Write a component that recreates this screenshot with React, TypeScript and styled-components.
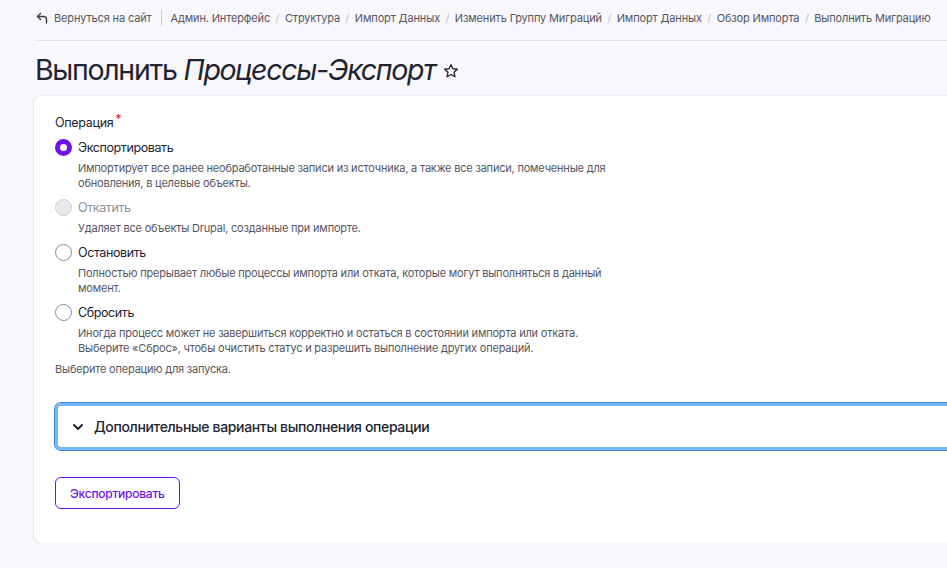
import React from "react";
import styled, { createGlobalStyle } from "styled-components";

const GlobalStyle = createGlobalStyle`
  html, body {
    margin: 0;
    padding: 0;
    background: #f8f7fc;
    overflow: hidden;
  }
  body {
    font-family: Inter, "Noto Sans", sans-serif;
    color: #222330;
  }
`;

const Page = styled.div`
  width: 1120px;
  padding: 0 0 0 34px;
  box-sizing: border-box;
`;

const Breadcrumbs = styled.nav`
  display: flex;
  align-items: center;
  padding: 8px 0 12px 2px;
  border-bottom: 1px solid #e4e2ec;
  font-size: 11px;
  letter-spacing: -0.15px;
  line-height: 20px;
  color: #55565f;
`;

const BackLink = styled.a`
  display: flex;
  align-items: center;
  gap: 6px;
  padding-right: 9px;
  margin-right: 9px;
  border-right: 1px solid #c9c8d2;
  color: #55565f;
  text-decoration: none;
  height: 16px;
`;

const Crumb = styled.a`
  color: #55565f;
  text-decoration: none;
`;

const Slash = styled.span`
  color: #c4c3cc;
  margin: 0 5.5px;
`;

const Title = styled.h1`
  display: flex;
  align-items: center;
  margin: 11px 0 8px 1px;
  font-size: 28.5px;
  line-height: 36px;
  font-weight: 400;
  letter-spacing: -1.3px;
  em {
    font-style: italic;
    margin-left: 7px;
  }
`;

const Star = styled.svg`
  margin-left: 8px;
  margin-top: 2px;
`;

const Card = styled.div`
  background: #fff;
  border-radius: 8px;
  box-shadow: 0 1px 3px rgba(40, 30, 80, 0.12), 0 0 0 1px rgba(40, 30, 80, 0.03);
  padding: 18px 21px 34px;
`;

const FieldLabel = styled.div`
  font-size: 12.5px;
  letter-spacing: -0.3px;
  line-height: 18px;
  margin-bottom: 5px;
  sup {
    color: #d72222;
    font-size: 12px;
    margin-left: 2px;
    vertical-align: 4px;
    line-height: 0;
  }
`;

const Option = styled.div`
  margin-bottom: 6px;
`;

const OptionRow = styled.label<{ $disabled?: boolean }>`
  display: flex;
  align-items: center;
  gap: 6px;
  height: 20px;
  font-size: 12.5px;
  letter-spacing: -0.4px;
  color: ${(p) => (p.$disabled ? "#8e8f96" : "#222330")};
`;

const Radio = styled.span<{ $checked?: boolean; $disabled?: boolean }>`
  width: 17px;
  height: 17px;
  box-sizing: border-box;
  border-radius: 50%;
  flex-shrink: 0;
  background: ${(p) => (p.$disabled ? "#e8e8ea" : "#fff")};
  border: ${(p) =>
    p.$checked ? "5px solid #6d11ec" : p.$disabled ? "1px solid #cfcfd4" : "1px solid #8a8d96"};
`;

const Description = styled.div`
  margin: 4px 0 0 23px;
  max-width: 530px;
  font-size: 11px;
  letter-spacing: -0.2px;
  line-height: 15px;
  color: #55565f;
`;

const Hint = styled.div`
  font-size: 11px;
  letter-spacing: -0.2px;
  line-height: 15px;
  color: #55565f;
  margin-top: 0;
`;

const Details = styled.div`
  margin-top: 26px;
  height: 47px;
  box-sizing: border-box;
  border: 3px solid #74b8f6;
  box-shadow: 0 0 0 1px #3a85d6;
  border-radius: 6px;
  display: flex;
  align-items: center;
  padding-left: 14px;
  gap: 10px;
  font-size: 14px;
  letter-spacing: -0.35px;
  font-weight: 500;
  color: #222330;
`;

const Button = styled.button`
  margin-top: 27px;
  height: 32px;
  padding: 0 14px;
  border: 1px solid #6d11ec;
  border-radius: 6px;
  background: #fff;
  color: #6d11ec;
  font-family: Inter, "Noto Sans", sans-serif;
  font-size: 12px;
  letter-spacing: -0.25px;
  font-weight: 500;
`;

const options = [
  {
    label: "Экспортировать",
    checked: true,
    text: "Импортирует все ранее необработанные записи из источника, а также все записи, помеченные для обновления, в целевые объекты.",
  },
  {
    label: "Откатить",
    disabled: true,
    text: "Удаляет все объекты Drupal, созданные при импорте.",
  },
  {
    label: "Остановить",
    text: "Полностью прерывает любые процессы импорта или отката, которые могут выполняться в данный момент.",
  },
  {
    label: "Сбросить",
    text: "Иногда процесс может не завершиться корректно и остаться в состоянии импорта или отката. Выберите «Сброс», чтобы очистить статус и разрешить выполнение других операций.",
  },
];

const crumbs = [
  "Админ. Интерфейс",
  "Структура",
  "Импорт Данных",
  "Изменить Группу Миграций",
  "Импорт Данных",
  "Обзор Импорта",
  "Выполнить Миграцию",
];

export default function App() {
  return (
    <Page>
      <GlobalStyle />
      <Breadcrumbs>
        <BackLink href="#">
          <svg width="12" height="12" viewBox="0 0 12 12" fill="none" stroke="#3b3c45" strokeWidth="1.4" strokeLinecap="round" strokeLinejoin="round">
            <path d="M4.5 1.5L1.5 4.5L4.5 7.5" />
            <path d="M1.5 4.5H7.5C9.2 4.5 10.5 5.8 10.5 7.5V11" />
          </svg>
          Вернуться на сайт
        </BackLink>
        {crumbs.map((c, i) => (
          <React.Fragment key={i}>
            {i > 0 && <Slash>/</Slash>}
            <Crumb href="#">{c}</Crumb>
          </React.Fragment>
        ))}
      </Breadcrumbs>
      <Title>
        Выполнить <em>Процессы-Экспорт</em>
        <Star width="16" height="16" viewBox="0 0 24 24" fill="none" stroke="#222330" strokeWidth="2" strokeLinejoin="round">
          <path d="M12 2.5l2.9 6.1 6.6.8-4.9 4.6 1.3 6.6L12 17.3l-5.9 3.3 1.3-6.6-4.9-4.6 6.6-.8z" />
        </Star>
      </Title>
      <Card>
        <FieldLabel>
          Операция<sup>*</sup>
        </FieldLabel>
        {options.map((o) => (
          <Option key={o.label}>
            <OptionRow $disabled={o.disabled}>
              <Radio $checked={o.checked} $disabled={o.disabled} />
              {o.label}
            </OptionRow>
            <Description>{o.text}</Description>
          </Option>
        ))}
        <Hint>Выберите операцию для запуска.</Hint>
        <Details>
          <svg width="12" height="12" viewBox="0 0 12 12" fill="none" stroke="#222330" strokeWidth="2" strokeLinecap="round" strokeLinejoin="round">
            <path d="M2 4l4 4 4-4" />
          </svg>
          Дополнительные варианты выполнения операции
        </Details>
        <Button>Экспортировать</Button>
      </Card>
    </Page>
  );
}
